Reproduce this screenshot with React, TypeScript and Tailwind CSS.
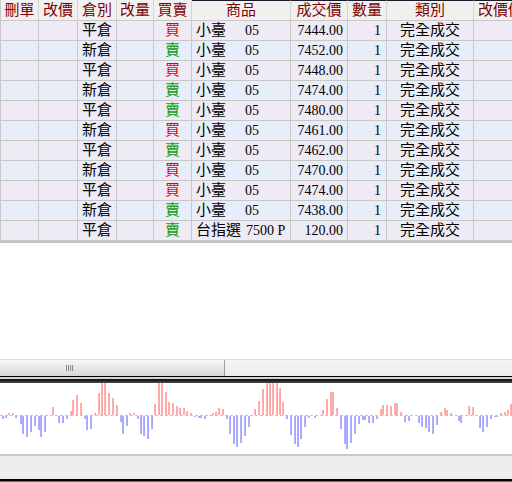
import React from "react"

type Row = {
  pos: string
  side: "買" | "賣"
  name: string
  contract: string
  gap: string
  price: string
}

const rows: Row[] = [
  { pos: "平倉", side: "買", name: "小臺", contract: "05", gap: "ml-[19px]", price: "7444.00" },
  { pos: "新倉", side: "賣", name: "小臺", contract: "05", gap: "ml-[19px]", price: "7452.00" },
  { pos: "平倉", side: "買", name: "小臺", contract: "05", gap: "ml-[19px]", price: "7448.00" },
  { pos: "新倉", side: "賣", name: "小臺", contract: "05", gap: "ml-[19px]", price: "7474.00" },
  { pos: "平倉", side: "賣", name: "小臺", contract: "05", gap: "ml-[19px]", price: "7480.00" },
  { pos: "新倉", side: "買", name: "小臺", contract: "05", gap: "ml-[19px]", price: "7461.00" },
  { pos: "平倉", side: "賣", name: "小臺", contract: "05", gap: "ml-[19px]", price: "7462.00" },
  { pos: "新倉", side: "買", name: "小臺", contract: "05", gap: "ml-[19px]", price: "7470.00" },
  { pos: "平倉", side: "買", name: "小臺", contract: "05", gap: "ml-[19px]", price: "7474.00" },
  { pos: "新倉", side: "賣", name: "小臺", contract: "05", gap: "ml-[19px]", price: "7438.00" },
  { pos: "平倉", side: "賣", name: "台指選", contract: "7500 P", gap: "ml-[5px]", price: "120.00" },
]

// [x, value] — positive goes up (red), negative down (blue)
const bars: [number, number][] = [
  [3, -3], [6, -2], [9, 2], [13, 2], [16, -2], [21, -8], [23, -18], [27, -21], [31, -16], [35, -10],
  [39, -14], [41, -21], [45, -16], [53, 8], [59, -7], [63, -7], [67, -3], [71, 4], [73, 15], [77, 20],
  [81, 12], [85, -3], [87, -14], [91, -13], [95, 2], [99, 22], [102, 32], [105, 32], [109, 22], [113, 17],
  [117, 10], [121, -6], [123, -18], [127, -10], [130, 2], [134, 2], [138, -3], [141, -18], [144, -20],
  [148, -23], [152, -13], [155, 11], [159, 32], [162, 32], [166, 23], [169, 13], [173, 12], [177, 9],
  [180, 7], [184, 7], [187, 4], [191, 2], [195, -1], [199, -2], [201, -2], [205, -3], [213, 2], [216, 3],
  [219, 7], [223, 6], [227, -3], [230, -18], [234, -28], [237, -31], [241, -27], [245, -20], [249, -11],
  [255, 6], [259, 14], [263, 26], [267, 32], [270, 32], [273, 32], [277, 32], [280, 27], [283, 13],
  [287, -3], [291, -19], [295, -28], [298, -31], [301, -23], [305, -11], [309, -2], [315, -2], [323, 5],
  [327, 16], [331, 23], [333, 23], [337, 7], [341, -13], [345, -28], [347, -33], [351, -27], [355, -18],
  [359, -8], [363, -4], [365, -4], [369, -7], [373, -7], [377, -3], [381, 6], [383, 10], [387, 10],
  [391, 9], [395, 12], [397, 12], [401, 3], [405, -6], [409, -5], [419, -7], [422, -11], [426, -12],
  [429, -16], [433, -18], [437, -9], [441, 3], [445, 7], [447, 5], [451, 2], [459, -5], [461, -7],
  [469, 9], [473, 8], [480, -12], [483, -16], [487, -11], [491, -3], [495, -1], [497, -1], [501, 2],
  [505, 3], [508, 5], [511, 11],
]

const BASE = 32

const HeadCell = ({ w, dark, children }: { w: string; dark?: boolean; children: React.ReactNode }) => (
  <div
    className={`${w} shrink-0 h-full border-r border-[#d4d4d4] flex items-center justify-center text-[15px] text-[#800000] whitespace-nowrap overflow-hidden ${
      dark ? "border-t border-t-[#1a1a2a]" : ""
    }`}
  >
    {children}
  </div>
)

const App: React.FC = () => {
  return (
    <div className="w-[512px] h-[482px] overflow-hidden bg-white flex flex-col font-['Liberation_Serif','Noto_Sans_CJK_TC',serif] text-black">
      <div className="flex flex-col">
        <div className="flex h-[21px] bg-[#f0f0f0] border-l border-[#c8c8c8] border-b border-b-[#c8c8c8] leading-none">
          <HeadCell w="w-[38px]">刪單</HeadCell>
          <HeadCell w="w-[39px]">改價</HeadCell>
          <HeadCell w="w-[39px]">倉別</HeadCell>
          <HeadCell w="w-[37px]">改量</HeadCell>
          <HeadCell w="w-[38px]">買賣</HeadCell>
          <HeadCell w="w-[99px]" dark>商品</HeadCell>
          <HeadCell w="w-[57px]" dark>成交價</HeadCell>
          <HeadCell w="w-[39px]" dark>數量</HeadCell>
          <HeadCell w="w-[87px]" dark>類別</HeadCell>
          <div className="w-[60px] shrink-0 h-full border-t border-t-[#1a1a2a] flex items-center pl-[4px] text-[15px] text-[#800000] whitespace-nowrap">
            改價價格
          </div>
        </div>

        {rows.map((r, i) => (
          <div
            key={i}
            className={`flex h-[20px] border-l border-[#c8c8c8] border-b border-b-[#c8c8c8] leading-[19px] ${
              i % 2 === 0 ? "bg-[#efebf5]" : "bg-[#e7eef9]"
            }`}
          >
            <div className="w-[38px] shrink-0 border-r border-[#c8c8c8]" />
            <div className="w-[39px] shrink-0 border-r border-[#c8c8c8]" />
            <div className="w-[39px] shrink-0 border-r border-[#c8c8c8] text-center text-[15px]">{r.pos}</div>
            <div className="w-[37px] shrink-0 border-r border-[#c8c8c8]" />
            <div
              className={`w-[38px] shrink-0 border-r border-[#c8c8c8] text-center text-[15px] ${
                r.side === "買" ? "text-[#e80000]" : "text-[#109a10]"
              }`}
            >
              {r.side}
            </div>
            <div className="w-[99px] shrink-0 border-r border-[#c8c8c8] pl-[4px] flex items-center whitespace-nowrap overflow-hidden">
              <span className="text-[15px]">{r.name}</span>
              <span className={`${r.gap} text-[14px]`}>{r.contract}</span>
            </div>
            <div className="w-[57px] shrink-0 border-r border-[#c8c8c8] text-right pr-[4px] text-[14px]">{r.price}</div>
            <div className="w-[39px] shrink-0 border-r border-[#c8c8c8] text-right pr-[5px] text-[14px]">1</div>
            <div className="w-[87px] shrink-0 border-r border-[#c8c8c8] text-center text-[15px]">完全成交</div>
            <div className="w-[60px] shrink-0" />
          </div>
        ))}
        <div className="h-[2px] bg-[#c4c4c4]" />
      </div>

      <div className="flex-1" />

      <div className="h-px bg-[#dcdcdc]" />
      <div className="flex h-[16px]">
        <div className="w-[225px] h-full bg-gradient-to-b from-[#f7f7f7] to-[#d6d6d6] border-r border-[#9c9c9c] flex items-center pl-[66px] gap-[1px]">
          <span className="w-px h-[6px] bg-[#8c8c8c]" />
          <span className="w-px h-[6px] bg-[#8c8c8c]" />
          <span className="w-px h-[6px] bg-[#8c8c8c]" />
          <span className="w-px h-[6px] bg-[#8c8c8c]" />
        </div>
        <div className="flex-1 h-full bg-gradient-to-b from-[#f5f5f5] to-[#ececec]" />
      </div>
      <div className="h-px bg-black" />
      <div className="h-[2px] bg-[#d4d4d4]" />
      <div className="h-[4px] bg-gradient-to-b from-[#0c0c0c] to-[#4a4a4a]" />

      <svg width="512" height="71" viewBox="0 0 512 71" className="block shrink-0">
        <line x1="0" y1={BASE + 0.5} x2="512" y2={BASE + 0.5} stroke="#c4c4c4" strokeDasharray="3 2" />
        {bars.map(([x, v], i) =>
          v > 0 ? (
            <rect key={i} x={x - 0.6} y={BASE - v} width="1.3" height={v} fill="#ff7f7f" />
          ) : (
            <rect key={i} x={x - 0.6} y={BASE + 1} width="1.3" height={-v} fill="#7f7fff" />
          )
        )}
      </svg>

      <div className="h-[2px] bg-[#c8c8c8]" />
      <div className="h-[23px] bg-[#eeeeee]" />
      <div className="h-[2px] bg-black" />
      <div className="h-px bg-[#6a6a6a]" />
    </div>
  )
}

export default App
